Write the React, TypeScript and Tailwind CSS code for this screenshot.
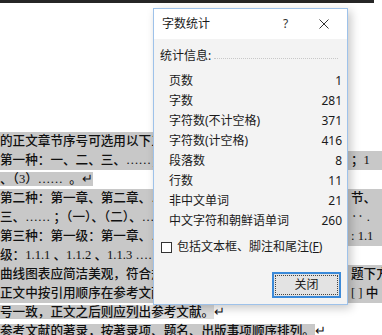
import React from "react";

const GRAY = "bg-[#c8c8c8]";

type Line = {
  left: React.ReactNode;
  leftFill?: boolean;
  right?: string;
  rightGray?: boolean;
};

const lines: Line[] = [
  { left: "的正文章节序号可选用以下三种格式", leftFill: true },
  { left: "第一种：一、二、三、……；1、2、3", leftFill: true, right: "；1", rightGray: true },
  {
    left: (
      <span className="bg-[#c8c8c8]">、（3）……&nbsp;&nbsp;。↵</span>
    ),
  },
  { left: "第二种：第一章、第二章、……第一节、第二", leftFill: true, right: "节、", rightGray: true },
  { left: "三、……&nbsp;；（一）、（二）、……", leftFill: true, right: "‥  .", rightGray: true },
  { left: "第三种：第一级：第一章、……第二级", leftFill: true, right: ": 1.1", rightGray: true },
  { left: "级：1.1.1 、1.1.2 、1.1.3 ……", leftFill: true },
  { left: "曲线图表应简洁美观，符合规范，图序图题", leftFill: true, right: "题下方", rightGray: true },
  { left: "正文中按引用顺序在参考文献序号外加", leftFill: true, right: "[ ] 中", rightGray: true },
  {
    left: (
      <>
        <span className="bg-[#c8c8c8]">号一致，正文之后则应列</span>
        <span className="bg-[#dedede]">出参考文献。</span>
        <span>↵</span>
      </>
    ),
  },
  {
    left: (
      <>
        <span className="bg-[#c8c8c8]">参考文献的著录，按著录项、题名、出版事项顺序排列。</span>
        <span>↵</span>
      </>
    ),
  },
];

const stats: [string, string][] = [
  ["页数", "1"],
  ["字数", "281"],
  ["字符数(不计空格)", "371"],
  ["字符数(计空格)", "416"],
  ["段落数", "8"],
  ["行数", "11"],
  ["非中文单词", "21"],
  ["中文字符和朝鲜语单词", "260"],
];

function DocLine({ line }: { line: Line }) {
  const leftContent =
    typeof line.left === "string" ? (
      <span dangerouslySetInnerHTML={{ __html: line.left }} />
    ) : (
      line.left
    );
  return (
    <div className="h-[19px] flex items-stretch leading-[19px]">
      <div
        className={`w-[348px] shrink-0 overflow-hidden whitespace-nowrap ${
          line.leftFill ? GRAY : ""
        }`}
      >
        {leftContent}
      </div>
      <div
        className={`flex-1 overflow-hidden whitespace-nowrap pl-[3px] ${
          line.rightGray ? GRAY : ""
        }`}
      >
        {line.right ?? ""}
      </div>
    </div>
  );
}

export default function App() {
  return (
    <div className="relative w-[382px] h-[335px] overflow-hidden bg-white">
      {/* Document */}
      <div className="font-['Liberation_Serif','Noto_Sans_CJK_SC',serif] text-[12.6px] font-medium text-[#111]">
        <div className="h-[3px] w-[374px] bg-[#262626]" />
        <div className="h-[129px]" />
        {lines.map((l, i) => (
          <DocLine key={i} line={l} />
        ))}
      </div>

      {/* Dialog */}
      <div className="absolute left-[153px] top-[8px] w-[195px] h-[297px] border border-[#9ec2ea] bg-[#f3f3f3] shadow-[3px_3px_9px_rgba(0,0,0,0.22)] flex flex-col font-['Noto_Sans','Noto_Sans_CJK_SC',sans-serif] text-[12px] text-[#1a1a1a]">
        {/* title bar */}
        <div className="h-[30px] bg-white flex items-center pl-[8px] shrink-0">
          <span className="w-[121px]">字数统计</span>
          <span className="w-[36px] text-[12px] text-[#333]">?</span>
          <svg width="10" height="10" viewBox="0 0 10 10" className="text-[#333]">
            <path d="M0.5 0.5 L9.5 9.5 M9.5 0.5 L0.5 9.5" stroke="currentColor" strokeWidth="1" />
          </svg>
        </div>

        {/* body */}
        <div className="flex flex-col pt-[7px]">
          <div className="h-[20px] flex items-center pl-[6px] pr-[9px]">
            <span>统计信息:</span>
            <div className="flex-1 ml-[3px] mt-[4px] border-b border-dotted border-[#c8c8c8]" />
          </div>
          <div className="flex flex-col mt-[5px] pl-[15px] pr-[5px]">
            {stats.map(([k, v]) => (
              <div key={k} className="h-[20px] flex items-center justify-between">
                <span>{k}</span>
                <span>{v}</span>
              </div>
            ))}
          </div>
          <div className="h-[20px] mt-[6px] flex items-center pl-[7px] gap-[5px]">
            <div className="w-[11px] h-[11px] border border-[#333] bg-white" />
            <span>包括文本框、脚注和尾注(<span className="underline">F</span>)</span>
          </div>
          <div className="flex justify-end pr-[6px] mt-[15px]">
            <div className="w-[69px] h-[26px] border-2 border-[#3b8ad9] bg-[#e3e3e3] p-[1px]">
              <div className="w-full h-full border border-dotted border-[#444] flex items-center justify-center">
                关闭
              </div>
            </div>
          </div>
        </div>
      </div>
    </div>
  );
}
